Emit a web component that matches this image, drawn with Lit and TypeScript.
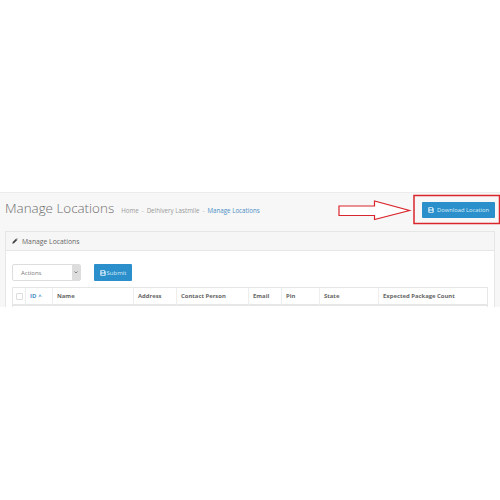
import { LitElement, html, css } from "lit";
import { customElement } from "lit/decorators.js";

const saveIcon = html`<svg class="save" viewBox="0 0 10 10"><path fill-rule="evenodd" d="M1 0.5h6.6L9.5 2.4V8.5a1 1 0 0 1-1 1h-7a1 1 0 0 1-1-1v-7a1 1 0 0 1 .5-1zM2.5 1.5v2.5h4.5V1.5zM2.5 6v2.5h5V6z"/></svg>`;

@customElement("app-root")
export class AppRoot extends LitElement {
  static styles = css`
    :host { display: block; width: 500px; height: 500px; background: #fff; overflow: hidden; position: relative; font-family: "Open Sans", "Liberation Sans", sans-serif; color: #555; }
    .spacer { height: 192px; }
    .page { height: 115px; background: #f7f7f7; border-top: 1px solid #ececec; box-sizing: border-box; overflow: hidden; padding: 0 5px; display: flex; flex-direction: column; }
    .head { height: 38px; padding-bottom: 5px; box-sizing: border-box; display: flex; align-items: center; gap: 7px; flex: none; }
    .title { font-size: 13.4px; color: #6e6e6e; font-weight: 300; margin: 0; position: relative; top: -1.5px; }
    .crumbs { display: flex; align-items: center; gap: 3px; font-size: 6.2px; color: #999; position: relative; top: 1px; }
    .crumbs .cur { color: #4a8dc4; }
    .sep { color: #bbb; }
    .btn { background: #2a8fcb; color: #dcedf8; border-radius: 1px; display: flex; align-items: center; font-size: 5.8px; box-sizing: border-box; }
    .save { width: 6px; height: 6px; fill: #e6f2fa; flex: none; }
    .dl { margin-left: auto; width: 73px; height: 16px; padding-left: 6px; gap: 3px; }
    .panel { flex: 1; background: #fff; border: 1px solid #e6e6e6; border-bottom: 0; }
    .ph { height: 18px; box-sizing: content-box; background: #f6f6f6; border-bottom: 1px solid #e6e6e6; display: flex; align-items: center; gap: 4px; padding-left: 6px; font-size: 6.8px; color: #666; }
    .pencil { width: 6px; height: 6px; fill: #444; }
    .pb { padding: 13px 6px 0 6px; }
    .tools { display: flex; align-items: center; gap: 13px; height: 17px; }
    .select { width: 69px; height: 17px; box-sizing: border-box; border: 1px solid #ddd; border-radius: 2px; display: flex; align-items: center; justify-content: space-between; font-size: 6px; color: #777; padding-left: 8px; overflow: hidden; }
    .caret { width: 8px; height: 100%; background: #ddd; display: flex; align-items: center; justify-content: center; }
    .caret svg { width: 4px; height: 3px; fill: none; stroke: #444; stroke-width: 1.2; }
    .submit { width: 38px; height: 17px; justify-content: center; gap: 1px; font-size: 6px; }
    .table { display: grid; grid-template-columns: 12px 27px 81px 43px 72px 33px 38px 59px 1fr; margin-top: 6px; height: 20px; border: 1px solid #e6e6e6; border-bottom: 0; width: 476px; box-sizing: border-box; font-size: 5.9px; font-weight: 700; color: #666; }
    .cell { height: 18px; box-sizing: border-box; border-bottom: 2px solid #e6e6e6; display: flex; align-items: center; gap: 2px; padding-left: 4px; border-left: 1px solid #eee; white-space: nowrap; }
    .cell:first-child { border-left: 0; padding-left: 3px; }
    .check { width: 5px; height: 5px; border: 1px solid #ddd; border-radius: 1px; }
    .sorted { color: #4a8dc4; }
    .overlay { position: absolute; left: 0; top: 0; width: 500px; height: 500px; pointer-events: none; }
  `;

  render() {
    const cols = ["Name", "Address", "Contact Person", "Email", "Pin", "State", "Expected Package Count"];
    return html`
      <div class="spacer"></div>
      <div class="page">
        <div class="head">
          <h1 class="title">Manage Locations</h1>
          <div class="crumbs">
            <span>Home</span><span class="sep">-</span><span>Delhivery Lastmile</span><span class="sep">-</span><span class="cur">Manage Locations</span>
          </div>
          <div class="btn dl">${saveIcon}<span>Download Location</span></div>
        </div>
        <div class="panel">
          <div class="ph">
            <svg class="pencil" viewBox="0 0 10 10"><path d="M0.5 9.5l.7-2.8 5.4-5.4 2.1 2.1-5.4 5.4zM7.3.6l.6-.4 1.9 1.9-.4.6z"/></svg>
            <span>Manage Locations</span>
          </div>
          <div class="pb">
            <div class="tools">
              <div class="select"><span>Actions</span><span class="caret"><svg viewBox="0 0 8 6"><path d="M1 1l3 3 3-3"/></svg></span></div>
              <div class="btn submit">${saveIcon}<span>Submit</span></div>
            </div>
            <div class="table">
              <div class="cell"><span class="check"></span></div>
              <div class="cell sorted">ID <span>^</span></div>
              ${cols.map((c) => html`<div class="cell">${c}</div>`)}
            </div>
          </div>
        </div>
      </div>
      <svg class="overlay" viewBox="0 0 500 500">
        <rect x="414" y="195.5" width="85.5" height="28" fill="none" stroke="#d9262c" stroke-width="1.5"/>
        <path d="M339 206H374.5V201L409.5 210.5L374.5 219.5V215.5H339Z" fill="#fff" stroke="#d9262c" stroke-width="1.2"/>
      </svg>
    `;
  }
}
